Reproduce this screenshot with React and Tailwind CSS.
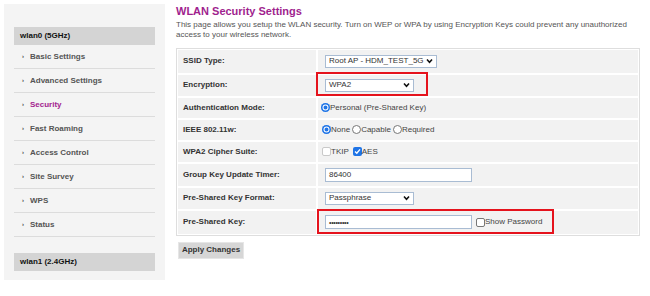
import React from "react";

const Chevron = () => (
  <svg width="7" height="6" viewBox="0 0 7 6" className="shrink-0">
    <path d="M1 1.5 L3.5 4.2 L6 1.5" fill="none" stroke="#111" strokeWidth="1.6" />
  </svg>
);

const Select = ({ w, text }) => (
  <div className={`${w} h-[13px] border border-[#a9bcd3] bg-white flex items-center justify-between pl-[3px] pr-[3px] text-[8px] leading-none text-[#333] whitespace-nowrap`}>
    <span className="whitespace-nowrap">{text}</span>
    <Chevron />
  </div>
);

const Input = ({ children }) => (
  <div className="w-[147px] h-[14px] border border-[#a9bcd3] bg-white flex items-center pl-[3px] text-[8px] leading-none text-[#333]">
    {children}
  </div>
);

const RadioOn = () => (
  <span className="inline-block w-[9px] h-[9px] rounded-full bg-[#1f74e6] shadow-[inset_0_0_0_1.5px_#1f74e6,inset_0_0_0_2.5px_white] shrink-0" />
);
const RadioOff = () => (
  <span className="inline-block w-[9px] h-[9px] rounded-full border border-[#777] bg-white shrink-0" />
);
const CheckOff = ({ light }) => (
  <span className={`inline-block w-[9px] h-[9px] rounded-[2px] border ${light ? "border-[#c9c9c9]" : "border-[#777]"} bg-white shrink-0`} />
);
const CheckOn = () => (
  <span className="inline-flex items-center justify-center w-[9px] h-[9px] rounded-[2px] bg-[#1f74e6] shrink-0">
    <svg width="7" height="7" viewBox="0 0 7 7">
      <path d="M1 3.6 L2.8 5.3 L6 1.4" fill="none" stroke="white" strokeWidth="1.4" />
    </svg>
  </span>
);

const Row = ({ h, label, children }) => (
  <>
    <div className={`${h} bg-[#f2f2f2] flex items-center pl-[5px] text-[8px] font-bold text-[#333]`}>{label}</div>
    <div className={`${h} bg-[#f2f2f2] flex items-center relative text-[8px] text-[#444] whitespace-nowrap`}>{children}</div>
  </>
);

const menu = ["Basic Settings", "Advanced Settings", "Security", "Fast Roaming", "Access Control", "Site Survey", "WPS", "Status"];

export default function App() {
  return (
    <div className="w-[650px] h-[296px] bg-white flex pl-[4px] pt-[4px] font-['Liberation_Sans',Arial,sans-serif] overflow-hidden">
      <div className="w-[161px] h-[276px] bg-[#f4f4f4] pt-[23px] px-[10px] flex flex-col">
        <div className="h-[18px] bg-[#d4d4d4] flex items-center pl-[6px] text-[8px] font-bold text-[#111]">wlan0 (5GHz)</div>
        {menu.map((m) => (
          <div key={m} className="h-[24px] border-b border-[#dcdcdc] flex items-center pl-[8px] text-[8px] font-bold">
            <span className="text-[6px] text-[#444] w-[8px]">›</span>
            <span className={m === "Security" ? "text-[#a3238f]" : "text-[#555]"}>{m}</span>
          </div>
        ))}
        <div className="h-[18px] mt-[16px] bg-[#d4d4d4] flex items-center pl-[6px] text-[8px] font-bold text-[#111]">wlan1 (2.4GHz)</div>
      </div>

      <div className="ml-[11px] w-[464px] flex flex-col">
        <div className="mt-[1px] h-[13px] text-[11px] leading-[13px] font-bold text-[#a01f8e]">WLAN Security Settings</div>
        <div className="mt-[2px] text-[8px] leading-[10.4px] text-[#555]">
          This page allows you setup the WLAN security. Turn on WEP or WPA by using Encryption Keys could prevent any unauthorized
          <br />
          access to your wireless network.
        </div>
        <div className="mt-[7px] border border-[#dedede] p-[1px] grid grid-cols-[138px_320px] gap-[2px]">
          <Row h="h-[23px]" label="SSID Type:">
            <div className="ml-[7px]"><Select w="w-[112px]" text="Root AP - HDM_TEST_5G" /></div>
          </Row>
          <Row h="h-[21px]" label="Encryption:">
            <div className="ml-[7px]"><Select w="w-[89px]" text="WPA2" /></div>
            <div className="absolute left-[-2px] top-[-3px] w-[112px] h-[24px] border-2 border-[#e5131d]" />
          </Row>
          <Row h="h-[20px]" label="Authentication Mode:">
            <div className="ml-[3px] flex items-center"><RadioOn /><span>Personal (Pre-Shared Key)</span></div>
          </Row>
          <Row h="h-[20px]" label="IEEE 802.11w:">
            <div className="ml-[4px] flex items-center">
              <RadioOn /><span>None</span>
              <span className="ml-[2px]" /><RadioOff /><span>Capable</span>
              <span className="ml-[2px]" /><RadioOff /><span>Required</span>
            </div>
          </Row>
          <Row h="h-[20px]" label="WPA2 Cipher Suite:">
            <div className="ml-[4px] flex items-center">
              <CheckOff light /><span>TKIP</span>
              <span className="ml-[4px]" /><CheckOn /><span>AES</span>
            </div>
          </Row>
          <Row h="h-[22px]" label="Group Key Update Timer:">
            <div className="ml-[7px]"><Input>86400</Input></div>
          </Row>
          <Row h="h-[21px]" label="Pre-Shared Key Format:">
            <div className="ml-[7px]"><Select w="w-[89px]" text="Passphrase" /></div>
          </Row>
          <Row h="h-[23px]" label="Pre-Shared Key:">
            <div className="ml-[7px] flex items-center">
              <Input><span className="text-[7px] tracking-[-0.3px]">•••••••••</span></Input>
              <span className="ml-[4px]" /><CheckOff /><span>Show Password</span>
            </div>
            <div className="absolute left-[-1px] top-[-2px] w-[237px] h-[25px] border-2 border-[#e5131d]" />
          </Row>
        </div>
        <div className="mt-[6px] ml-[2px] w-[66px] h-[17px] bg-[#d6d6d6] border border-[#e6e6e6] flex items-center justify-center text-[8px] font-bold text-[#333]">
          Apply Changes
        </div>
      </div>
    </div>
  );
}
